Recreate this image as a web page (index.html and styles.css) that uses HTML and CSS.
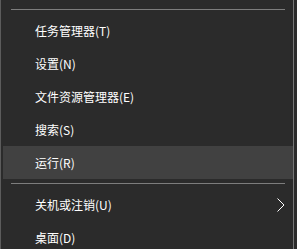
FILE: index.html
```html
<!DOCTYPE html>
<html lang="zh-CN">
<head>
  <meta charset="UTF-8">
  <meta name="viewport" content="width=device-width, initial-scale=1.0">
  <title>快速链接菜单</title>
  <link rel="stylesheet" href="styles.css">
</head>
<body>
  <div class="menu">
    <div class="menu-sep"></div>
    <div class="menu-item">任务管理器(T)</div>
    <div class="menu-item">设置(N)</div>
    <div class="menu-item">文件资源管理器(E)</div>
    <div class="menu-item">搜索(S)</div>
    <div class="menu-item active">运行(R)</div>
    <div class="menu-sep"></div>
    <div class="menu-item has-sub">
      <span>关机或注销(U)</span>
      <svg class="sub-arrow" width="8" height="14" viewBox="0 0 8 14">
        <path d="M0.5 0.5 L7 7 L0.5 13.5" fill="none" stroke="#fff" stroke-width="1"/>
      </svg>
    </div>
    <div class="menu-item">桌面(D)</div>
  </div>
</body>
</html>
```

FILE: styles.css
```css
html, body {
  margin: 0;
  padding: 0;
  background: #2b2b2b;
  overflow: hidden;
}
.menu {
  width: 294px;
  height: 249px;
  padding-top: 5px;
  box-sizing: border-box;
  background: #2b2b2b;
  border-left: 1px solid #5c5c5c;
  border-right: 1px solid #767676;
  display: flex;
  flex-direction: column;
  font-family: "Microsoft YaHei", "Noto Sans CJK SC", sans-serif;
  font-size: 12px;
  color: #fff;
}
.menu-sep {
  flex: none;
  height: 1px;
  margin: 4px 8px 4px 10px;
  background: #7d7d7d;
}
.menu-item {
  flex: none;
  height: 33px;
  margin-left: 2px;
  padding: 0 8px 0 32px;
  display: flex;
  align-items: center;
  justify-content: space-between;
  white-space: nowrap;
}
.menu-item.active {
  background: #414141;
}
.sub-arrow {
  display: block;
}
```
